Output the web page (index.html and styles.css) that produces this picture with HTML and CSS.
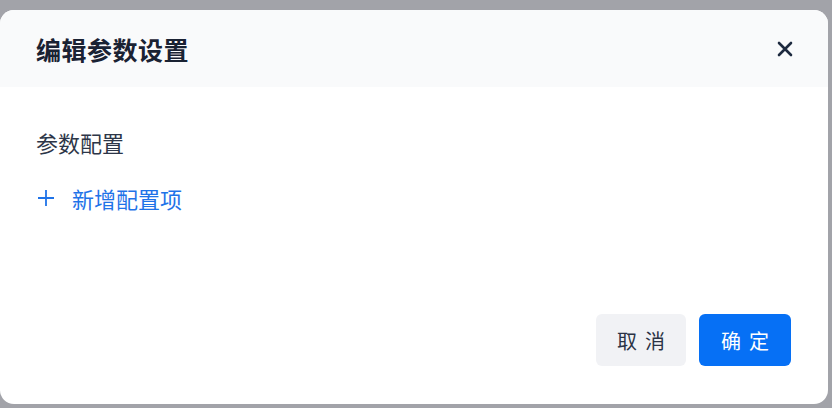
FILE: index.html
```html
<!DOCTYPE html>
<html>
<head>
  <meta charset="utf-8">
  <title>编辑参数设置</title>
  <link rel="stylesheet" href="styles.css">
</head>
<body>
  <div class="modal">
    <div class="modal-header">
      <h1 class="modal-title">编辑参数设置</h1>
      <button class="close" aria-label="关闭">
        <svg width="16" height="16" viewBox="0 0 16 16">
          <path d="M2 2 L14 14 M14 2 L2 14" stroke="#1e2a3f" stroke-width="2.6" stroke-linecap="round"/>
        </svg>
      </button>
    </div>

    <div class="modal-body">
      <div class="label">参数配置</div>
      <a class="add-link" href="#">
        <span class="plus">
          <svg width="18" height="18" viewBox="0 0 18 18">
            <path d="M9 1 V17 M1 9 H17" stroke="#1f73e8" stroke-width="1.8"/>
          </svg>
        </span>
        新增配置项
      </a>
    </div>

    <div class="modal-footer">
      <button class="btn btn-default">取消</button>
      <button class="btn btn-primary">确定</button>
    </div>
  </div>
</body>
</html>
```

FILE: styles.css
```css
html, body {
  margin: 0;
  height: 100%;
}
body {
  font-family: "Noto Sans CJK SC", "Noto Sans", sans-serif;
  background-color: #a2a3a9;
  overflow: hidden;
}
.modal {
  width: 828px;
  height: 394px;
  margin-top: 10px;
  background-color: #fff;
  border-radius: 14px;
  overflow: hidden;
  display: flex;
  flex-direction: column;
}
.modal-header {
  height: 77px;
  flex-shrink: 0;
  background-color: #f9fafb;
  display: flex;
  align-items: center;
  justify-content: space-between;
  padding: 0 34px 0 36px;
}
.modal-title {
  margin: 0;
  font-size: 25px;
  font-weight: 700;
  color: #1a2233;
  letter-spacing: 0.5px;
}
.close {
  border: none;
  background: none;
  padding: 0;
  width: 18px;
  height: 18px;
  display: flex;
  align-items: center;
  justify-content: center;
  cursor: pointer;
}
.modal-body {
  flex: 1;
  padding: 41px 36px 0;
}
.label {
  font-size: 22px;
  color: #2d3648;
  line-height: 28px;
}
.add-link {
  display: flex;
  align-items: center;
  margin-top: 28px;
  font-size: 22px;
  line-height: 28px;
  color: #1f73e8;
  text-decoration: none;
}
.plus {
  display: inline-flex;
  width: 20px;
  margin-left: 1px;
  margin-right: 15px;
}
.modal-footer {
  display: flex;
  justify-content: flex-end;
  gap: 13px;
  padding: 0 37px 38px;
}
.btn {
  height: 52px;
  padding: 0;
  border: none;
  border-radius: 6px;
  font-family: inherit;
  font-size: 20px;
  letter-spacing: 8px;
  text-indent: 8px;
  cursor: pointer;
}
.btn-default {
  width: 90px;
  background-color: #f1f2f5;
  color: #2a3345;
}
.btn-primary {
  width: 92px;
  background-color: #0670f5;
  color: #fff;
}
```
